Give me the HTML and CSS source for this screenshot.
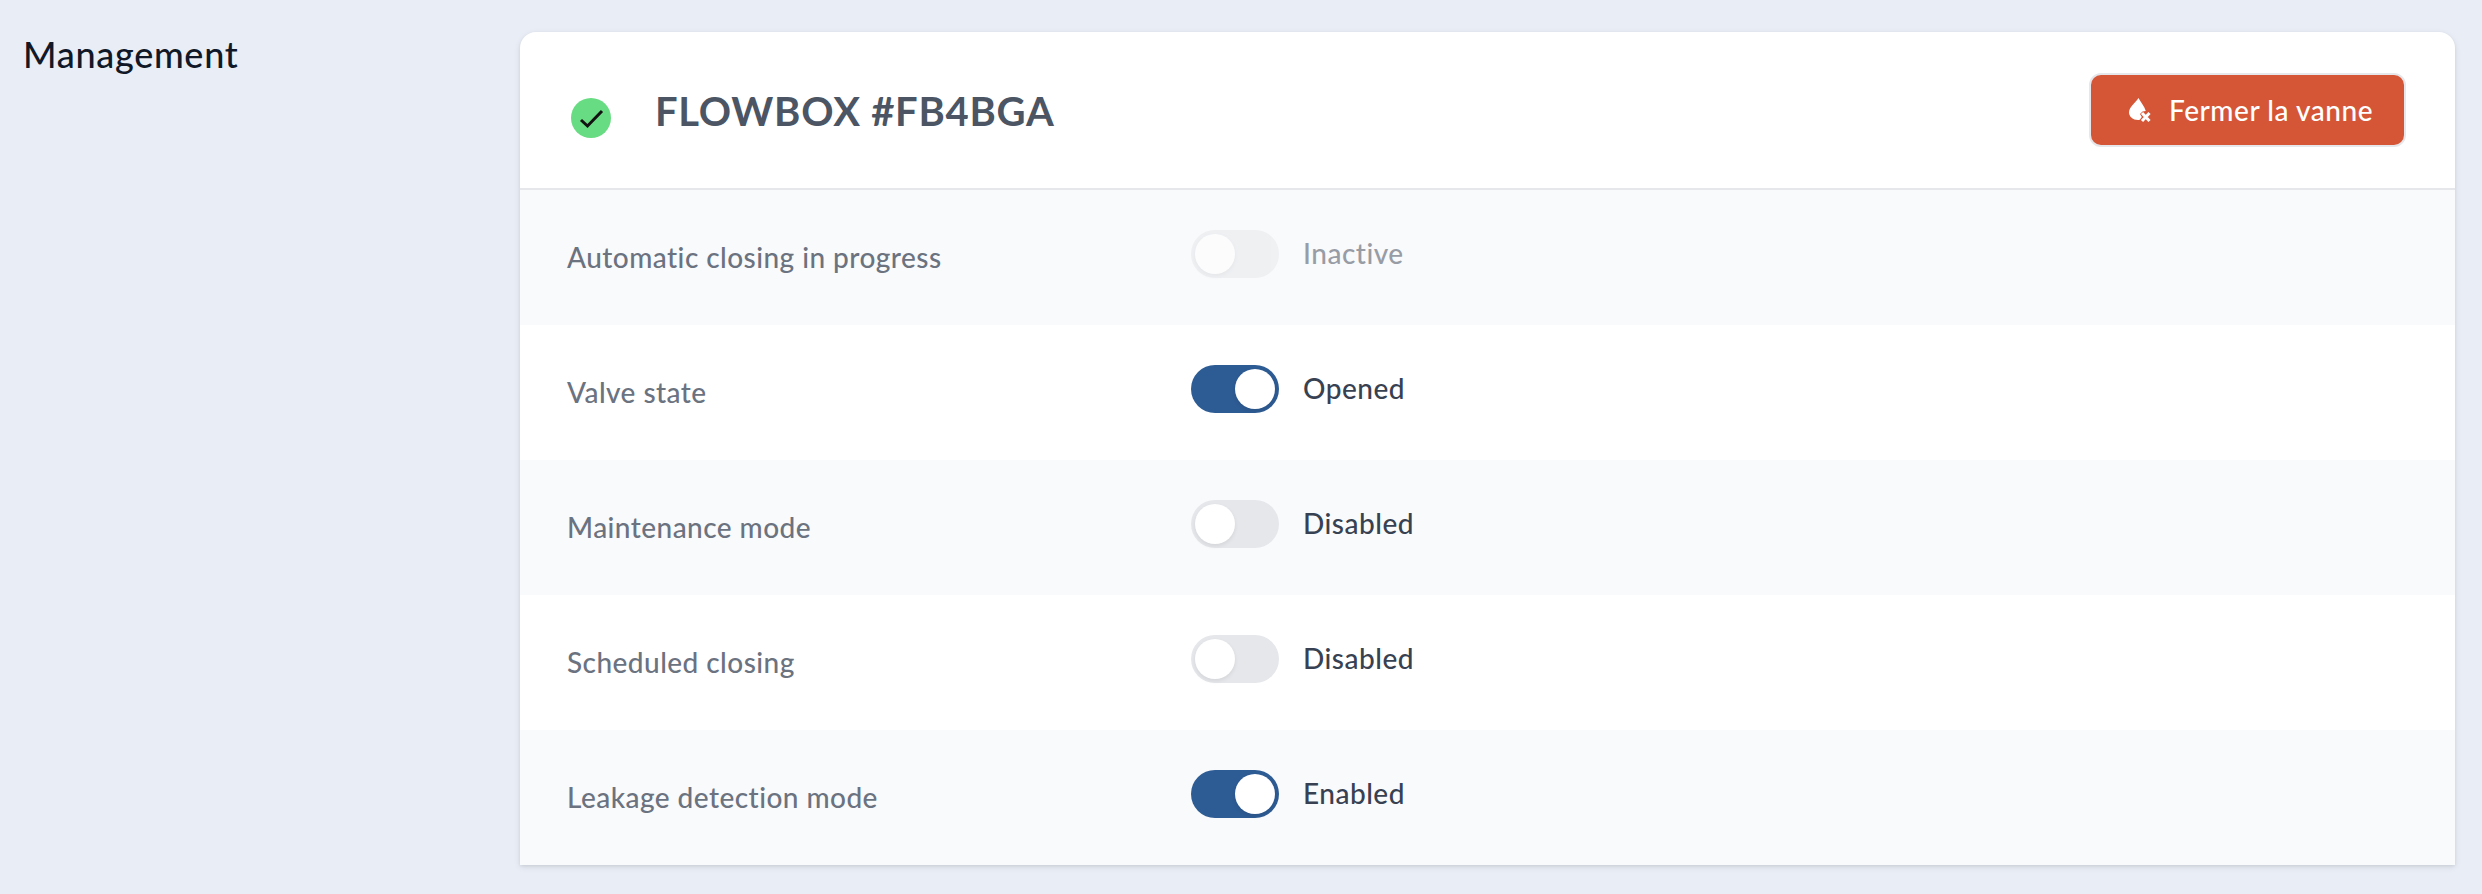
FILE: index.html
```html
<!DOCTYPE html>
<html lang="en">
<head>
<meta charset="utf-8">
<title>Management</title>
<link rel="stylesheet" href="styles.css">
</head>
<body>
<main class="layout">
  <h2 class="section-title">Management</h2>
  <section class="card">
    <header class="card-header">
      <div class="device">
        <svg class="status-icon" viewBox="0 0 40 40" aria-hidden="true"><circle cx="20" cy="20" r="20" fill="#68DC82"/><path d="M10 22 L16.5 28 L31 13" fill="none" stroke="#111" stroke-width="3"/></svg>
        <h1 class="device-name">FLOWBOX #FB4BGA</h1>
      </div>
      <button class="close-btn" type="button">
        <svg class="drop-icon" viewBox="0 0 22 25" aria-hidden="true"><path d="M9.5 0 C11.5 4 15.5 8 16.8 13 L13.5 13.5 L11 16 L12.8 19 L11 21.5 C10.5 21.9 9.8 22 9 22 C4 22 0 18.5 0 14.5 C0 9 6.5 5 9.5 0Z" fill="#fff"/><path d="M13 15 L20.5 23 M20.5 15 L13 23" stroke="#fff" stroke-width="3" fill="none"/></svg>
        <span>Fermer la vanne</span>
      </button>
    </header>
    <div class="row alt">
      <div class="label">Automatic closing in progress</div>
      <div class="control is-disabled"><span class="toggle"><span class="knob"></span></span><span class="state">Inactive</span></div>
    </div>
    <div class="row">
      <div class="label">Valve state</div>
      <div class="control"><span class="toggle on"><span class="knob"></span></span><span class="state">Opened</span></div>
    </div>
    <div class="row alt">
      <div class="label">Maintenance mode</div>
      <div class="control"><span class="toggle"><span class="knob"></span></span><span class="state">Disabled</span></div>
    </div>
    <div class="row">
      <div class="label">Scheduled closing</div>
      <div class="control"><span class="toggle"><span class="knob"></span></span><span class="state">Disabled</span></div>
    </div>
    <div class="row alt">
      <div class="label">Leakage detection mode</div>
      <div class="control"><span class="toggle on"><span class="knob"></span></span><span class="state">Enabled</span></div>
    </div>
  </section>
</main>
</body>
</html>
```
FILE: styles.css
```css
* { box-sizing: border-box; }
html, body { margin: 0; height: 100%; }
body {
  background: #E9EEF6;
  font-family: "Lato", "Noto Sans", sans-serif;
  overflow: hidden;
}
.layout {
  display: grid;
  grid-template-columns: 497px 1935px;
  padding: 32px 0 0 23px;
}
.section-title {
  margin: 0;
  font-size: 36px;
  line-height: 44px;
  font-weight: 500;
  letter-spacing: .7px;
  color: #111827;
}
.card {
  background: #fff;
  border-radius: 16px 16px 0 0;
  box-shadow: 0 2px 6px rgba(0,0,0,.10), 0 1px 3px rgba(0,0,0,.06);
}
.card-header {
  height: 158px;
  display: flex;
  align-items: flex-start;
  justify-content: space-between;
  padding: 41px 49px 0 51px;
  border-bottom: 2px solid #E5E7EB;
}
.device { display: flex; align-items: flex-start; gap: 44px; }
.status-icon { width: 40px; height: 40px; margin-top: 25px; flex: none; }
.device-name {
  margin: 10px 0 0;
  font-size: 40px;
  line-height: 56px;
  font-weight: 700;
  letter-spacing: .73px;
  color: #4B5563;
}
.close-btn {
  width: 317px;
  height: 74px;
  display: flex;
  align-items: center;
  gap: 18px;
  background: #D55636;
  border: 2px solid #E5E7EB;
  border-radius: 12px;
  color: #fff;
  font: 500 28px/40px "Lato", "Noto Sans", sans-serif;
  letter-spacing: .55px;
  padding: 0 0 0 38px;
}
.drop-icon { width: 22px; height: 25px; flex: none; }
.row {
  height: 135px;
  display: grid;
  grid-template-columns: 623px 1fr;
  padding: 40px 48px 0;
  background: #fff;
}
.row.alt { background: #F9FAFB; }
.label {
  font-size: 28px;
  line-height: 40px;
  font-weight: 500;
  letter-spacing: .45px;
  color: #6B7280;
  padding-top: 7px;
  margin-left: -1px;
}
.control { display: flex; align-items: center; gap: 24px; height: 48px; }
.state {
  font-size: 28px;
  line-height: 40px;
  font-weight: 500;
  letter-spacing: .5px;
  color: #374151;
  margin-top: -2px;
}
.toggle {
  width: 88px;
  height: 48px;
  border-radius: 24px;
  background: #E5E7EB;
  padding: 4px;
  display: flex;
  flex: none;
}
.toggle.on { background: #2D5B93; justify-content: flex-end; }
.knob {
  width: 40px;
  height: 40px;
  border-radius: 50%;
  background: #fff;
  box-shadow: 0 2px 4px rgba(0,0,0,.08);
}
.is-disabled .toggle, .is-disabled .state { opacity: .5; }
```
